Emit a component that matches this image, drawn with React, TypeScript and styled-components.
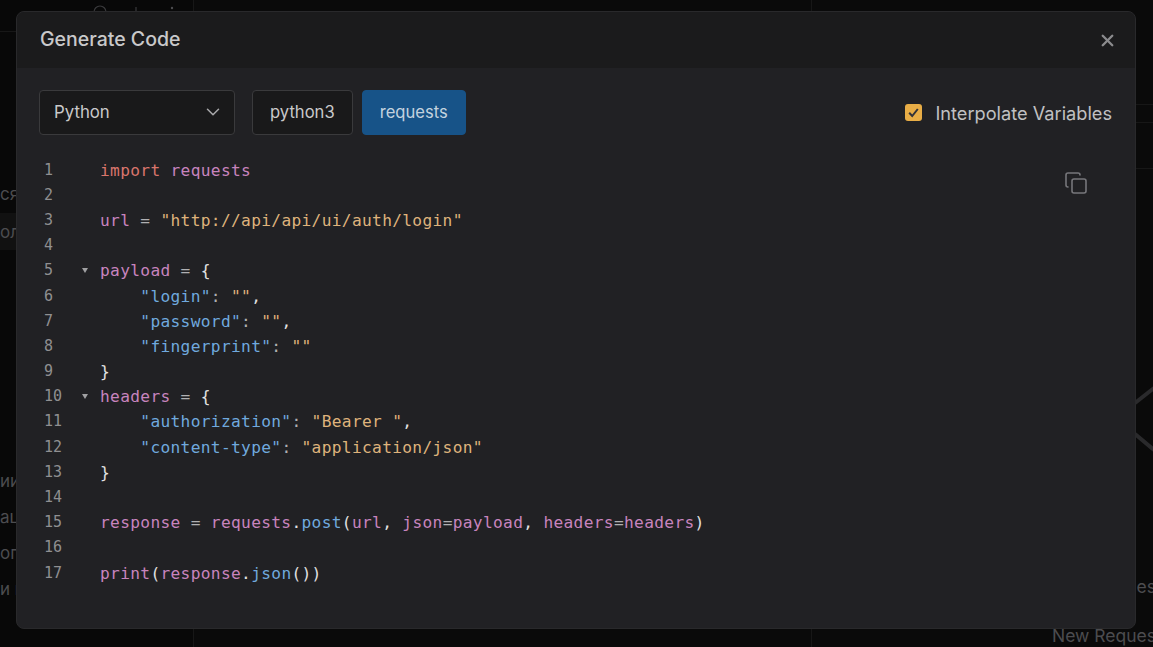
import { ChevronDown, Copy, X } from "lucide-react";
import styled, { createGlobalStyle } from "styled-components";

const GlobalStyle = createGlobalStyle`
  html, body {
    margin: 0;
    padding: 0;
    background: #0a0a0a;
    overflow: hidden;
  }
  * {
    box-sizing: border-box;
  }
`;

const Page = styled.div`
  position: relative;
  width: 1153px;
  height: 647px;
  overflow: hidden;
  display: grid;
  grid-template-columns: 194px 617px 1fr;
  background: #0a0a0a;
  font-family: Inter, "Liberation Sans", sans-serif;
`;

// the dimmed app behind the modal, only its edges stay visible
const Sidebar = styled.div`
  display: flex;
  flex-direction: column;
  background: #080808;
  border-right: 1px solid #171717;
`;

const SidebarTop = styled.div`
  height: 32px;
  flex-shrink: 0;
  padding: 3px 0 0 92px;
  border-bottom: 1px solid #171717;
  margin-bottom: 143px;
`;

const SideGroup = styled.div<{ $gap?: number }>`
  display: flex;
  flex-direction: column;
  margin-top: ${(p) => p.$gap || 0}px;
`;

const SideItem = styled.div<{ $active?: boolean }>`
  height: ${(p) => (p.$active ? 37 : 36)}px;
  display: flex;
  align-items: center;
  font-size: 17px;
  color: #4c4c4f;
  background: ${(p) => (p.$active ? "#111111" : "transparent")};
`;

const FirstItem = styled(SideItem)`
  height: 38px;
`;

const Center = styled.div``;

const RightPanel = styled.div`
  position: relative;
  display: flex;
  flex-direction: column;
  border-left: 1px solid #171717;
`;

const PanelLine = styled.div<{ $h: number }>`
  height: ${(p) => p.$h}px;
  flex-shrink: 0;
  border-bottom: 1px solid #171717;
`;

const RequestList = styled.div`
  margin-top: auto;
  padding: 0 0 1px 240px;
  display: flex;
  flex-direction: column;
  gap: 29px;
`;

const RequestLabel = styled.div`
  height: 20px;
  line-height: 20px;
  font-size: 17.5px;
  color: #4c4c4f;
  white-space: nowrap;
`;

const GraphEdges = styled.svg`
  position: absolute;
  left: 320px;
  top: 380px;
`;

const Modal = styled.div`
  position: absolute;
  left: 16px;
  top: 11px;
  width: 1120px;
  height: 618px;
  display: flex;
  flex-direction: column;
  background: #212124;
  border: 1px solid #29292b;
  border-radius: 8px;
  overflow: hidden;
`;

const Header = styled.div`
  height: 56px;
  flex-shrink: 0;
  display: flex;
  align-items: center;
  justify-content: space-between;
  padding: 0 18px 0 23px;
  background: #1b1b1c;
`;

const Title = styled.div`
  font-size: 19.5px;
  font-weight: 500;
  color: #c9c9ca;
  padding-bottom: 2px;
`;

const CloseButton = styled.div`
  display: flex;
  color: #8b8b8d;
`;

const Toolbar = styled.div`
  display: flex;
  align-items: center;
  height: 45px;
  margin-top: 22px;
  padding: 0 23px 0 22px;
`;

const Select = styled.div`
  width: 196px;
  height: 45px;
  display: flex;
  align-items: center;
  justify-content: space-between;
  padding: 0 10px 1px 14px;
  background: #19191a;
  border: 1px solid #3a3a3c;
  border-radius: 4px;
  font-size: 16.8px;
  color: #c9c9ca;
  svg {
    color: #a5a5a7;
  }
`;

const Option = styled.div<{ $active?: boolean }>`
  height: 45px;
  display: flex;
  align-items: center;
  padding: 0 17px 1px;
  border-radius: 4px;
  font-size: 16.6px;
  background: ${(p) => (p.$active ? "#175388" : "#19191a")};
  border: 1px solid ${(p) => (p.$active ? "#175388" : "#3a3a3c")};
  color: ${(p) => (p.$active ? "#c3d2df" : "#c9c9ca")};
  margin-left: ${(p) => (p.$active ? "9px" : "17px")};
`;

const Interpolate = styled.label`
  margin-left: auto;
  display: flex;
  align-items: center;
  gap: 13px;
  font-size: 18.2px;
  color: #c0c0c2;
`;

const CheckBox = styled.span`
  width: 17px;
  height: 17px;
  display: flex;
  align-items: center;
  justify-content: center;
  border-radius: 3px;
  background: #e8ad46;
`;

const CodeArea = styled.div`
  position: relative;
  flex: 1;
  padding-top: 22.6px;
  font-family: "DejaVu Sans Mono", "Liberation Mono", monospace;
  font-size: 16.2px;
  letter-spacing: 0.33px;
  line-height: 25.19px;
`;

const CopyButton = styled.div`
  position: absolute;
  right: 47px;
  top: 36px;
  display: flex;
  color: #77777b;
`;

const Line = styled.div`
  display: flex;
  height: 25.19px;
  white-space: pre;
`;

const LineNo = styled.div`
  width: 62px;
  flex-shrink: 0;
  padding-left: 27px;
  font-size: 15px;
  letter-spacing: 0;
  color: #8f8f91;
`;

const Fold = styled.div`
  width: 21px;
  flex-shrink: 0;
  display: flex;
  align-items: center;
  padding-left: 3px;
  svg {
    fill: #a0a0a2;
  }
`;

const Tok = styled.span<{ $c: string }>`
  color: ${(p) => p.$c};
`;

const RED = "#d9756c";
const PINK = "#c884be";
const STR = "#dfb37c";
const BLUE = "#70a9de";
const WHITE = "#e2e2e2";
const OP = "#b0b0b2";

type Token = [string, string];

const lines: { toks: Token[]; fold?: boolean }[] = [
  { toks: [["import", RED], [" ", OP], ["requests", PINK]] },
  { toks: [] },
  { toks: [["url", PINK], [" = ", OP], ['"http://api/api/ui/auth/login"', STR]] },
  { toks: [] },
  { fold: true, toks: [["payload", PINK], [" = ", OP], ["{", WHITE]] },
  { toks: [["    ", OP], ['"login"', BLUE], [": ", OP], ['""', STR], [",", WHITE]] },
  { toks: [["    ", OP], ['"password"', BLUE], [": ", OP], ['""', STR], [",", WHITE]] },
  { toks: [["    ", OP], ['"fingerprint"', BLUE], [": ", OP], ['""', STR]] },
  { toks: [["}", WHITE]] },
  { fold: true, toks: [["headers", PINK], [" = ", OP], ["{", WHITE]] },
  { toks: [["    ", OP], ['"authorization"', BLUE], [": ", OP], ['"Bearer "', STR], [",", WHITE]] },
  { toks: [["    ", OP], ['"content-type"', BLUE], [": ", OP], ['"application/json"', STR]] },
  { toks: [["}", WHITE]] },
  { toks: [] },
  {
    toks: [
      ["response", PINK], [" = ", OP], ["requests", PINK], [".", WHITE], ["post", BLUE], ["(", WHITE],
      ["url", PINK], [", ", WHITE], ["json", PINK], ["=", OP], ["payload", PINK], [", ", WHITE],
      ["headers", PINK], ["=", OP], ["headers", PINK], [")", WHITE],
    ],
  },
  { toks: [] },
  { toks: [["print", PINK], ["(", WHITE], ["response", PINK], [".", WHITE], ["json", BLUE], ["())", WHITE]] },
];

function App() {
  return (
    <>
      <GlobalStyle />
      <Page>
        <Sidebar>
          <SidebarTop>
            <svg width="84" height="14" viewBox="0 0 84 14" fill="none">
              <circle cx="8" cy="7" r="6" stroke="#3a3a3c" strokeWidth="1.2" />
              <path d="M44 2V8" stroke="#3a3a3c" strokeWidth="1.2" />
              <circle cx="80" cy="3" r="1.2" fill="#4c4c4f" />
            </svg>
          </SidebarTop>
          <SideGroup>
            <FirstItem>ся</FirstItem>
            <SideItem $active>ол</SideItem>
          </SideGroup>
          <SideGroup $gap={213}>
            <SideItem>ии</SideItem>
            <SideItem>ац</SideItem>
            <SideItem>ог</SideItem>
            <SideItem>и н</SideItem>
          </SideGroup>
        </Sidebar>
        <Center />
        <RightPanel>
          <PanelLine $h={105} />
          <PanelLine $h={18} />
          <PanelLine $h={46} />
          <GraphEdges width="22" height="72" viewBox="0 0 22 72" fill="none">
            <path d="M3 23L22 8M3 54L22 70" stroke="#2a2a2c" strokeWidth="4" />
          </GraphEdges>
          <RequestList>
            <RequestLabel>New Request</RequestLabel>
            <RequestLabel>New Request</RequestLabel>
          </RequestList>
        </RightPanel>

        <Modal>
          <Header>
            <Title>Generate Code</Title>
            <CloseButton>
              <X size={19} strokeWidth={3} />
            </CloseButton>
          </Header>
          <Toolbar>
            <Select>
              Python
              <ChevronDown size={22} strokeWidth={1.7} />
            </Select>
            <Option>python3</Option>
            <Option $active>requests</Option>
            <Interpolate>
              <CheckBox>
                <svg width="13" height="13" viewBox="0 0 13 13" fill="none">
                  <path d="M2.2 6.8L5.2 10L10.8 3" stroke="#33333a" strokeWidth="2" />
                </svg>
              </CheckBox>
              Interpolate Variables
            </Interpolate>
          </Toolbar>
          <CodeArea>
            <CopyButton>
              <Copy size={24} strokeWidth={1.6} />
            </CopyButton>
            {lines.map((line, i) => (
              <Line key={i}>
                <LineNo>{i + 1}</LineNo>
                <Fold>
                  {line.fold && (
                    <svg width="6" height="5" viewBox="0 0 6 5">
                      <path d="M0 0H6L3 5Z" />
                    </svg>
                  )}
                </Fold>
                <div>
                  {line.toks.map((t, j) => (
                    <Tok key={j} $c={t[1]}>{t[0]}</Tok>
                  ))}
                </div>
              </Line>
            ))}
          </CodeArea>
        </Modal>
      </Page>
    </>
  );
}

export default App;
